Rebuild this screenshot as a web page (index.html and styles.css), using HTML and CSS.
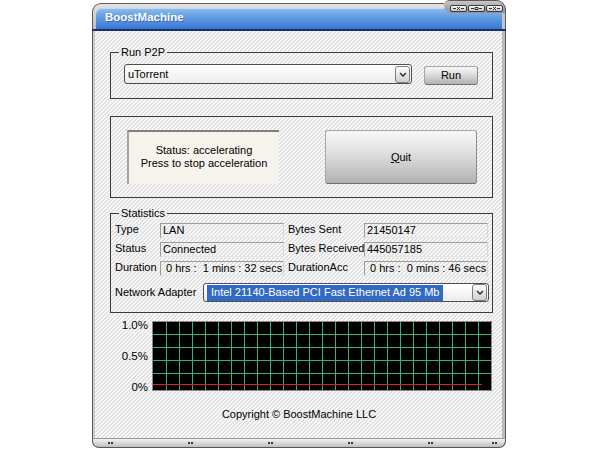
FILE: index.html
```html
<!DOCTYPE html>
<html>
<head>
<meta charset="utf-8">
<title>BoostMachine</title>
<link rel="stylesheet" href="styles.css">
</head>
<body>
<div class="window">
  <div class="titlebar">
    <div class="tb-left"><div class="tb-blue"><span class="title">BoostMachine</span></div></div>
    <div class="tb-right">
      <div class="caps">
        <span class="cap"><svg width="11" height="5" viewBox="0 0 11 5"><path d="M0 2.5H3M8 2.5H11M4 1L7 4M7 1L4 4" stroke="#333" stroke-width="1" fill="none"/></svg></span>
        <span class="cap"><svg width="11" height="5" viewBox="0 0 11 5"><path d="M0 2.5H3M8 2.5H11M4 1.5H7V3.5H4Z" stroke="#333" stroke-width="1" fill="none"/></svg></span>
        <span class="cap"><svg width="11" height="5" viewBox="0 0 11 5"><path d="M0 2.5H3M8 2.5H11M4 1L7 4M7 1L4 4" stroke="#333" stroke-width="1" fill="none"/></svg></span>
      </div>
    </div>
  </div>
  <div class="client">
    <fieldset class="group g1">
      <legend>Run P2P</legend>
      <div class="row1">
        <div class="combo c1">
          <span class="combo-text">uTorrent</span>
          <span class="combo-btn"><svg width="8" height="5" viewBox="0 0 8 5"><path d="M1 1L4 4L7 1" stroke="#333" stroke-width="1.5" fill="none"/></svg></span>
        </div>
        <button class="btn run">Run</button>
      </div>
    </fieldset>
    <div class="group g2">
      <div class="status">Status: accelerating<br>Press to stop acceleration</div>
      <button class="btn quit"><u>Q</u>uit</button>
    </div>
    <fieldset class="group g3">
      <legend>Statistics</legend>
      <div class="stats">
        <span class="lbl">Type</span><span class="fld">LAN</span><span class="lbl r">Bytes Sent</span><span class="fld">21450147</span>
        <span class="lbl">Status</span><span class="fld">Connected</span><span class="lbl r">Bytes Received</span><span class="fld">445057185</span>
        <span class="lbl">Duration</span><span class="fld pre"> 0 hrs :  1 mins : 32 secs</span><span class="lbl r">DurationAcc</span><span class="fld pre"> 0 hrs :  0 mins : 46 secs</span>
      </div>
      <div class="adapter">
        <span class="lbl wide">Network Adapter</span>
        <div class="combo c2">
          <span class="combo-text"><span class="sel">Intel 21140-Based PCI Fast Ethernet Ad 95 Mb</span></span>
          <span class="combo-btn"><svg width="8" height="5" viewBox="0 0 8 5"><path d="M1 1L4 4L7 1" stroke="#333" stroke-width="1.5" fill="none"/></svg></span>
        </div>
      </div>
    </fieldset>
    <div class="chart">
      <div class="yaxis"><span>1.0%</span><span>0.5%</span><span>0%</span></div>
      <svg class="plot" width="340" height="70" viewBox="0 0 340 70">
        <rect x="0.5" y="0.5" width="339" height="69" fill="#000" stroke="#8a8a8a"/>
        <path stroke="#38b07a" stroke-width="1" fill="none" d="M14.5 1V69M27.5 1V69M40.5 1V69M53.5 1V69M66.5 1V69M79.5 1V69M92.5 1V69M105.5 1V69M118.5 1V69M131.5 1V69M144.5 1V69M157.5 1V69M170.5 1V69M183.5 1V69M196.5 1V69M209.5 1V69M222.5 1V69M235.5 1V69M248.5 1V69M261.5 1V69M274.5 1V69M287.5 1V69M300.5 1V69M313.5 1V69M326.5 1V69M1 13.5H339M1 26.5H339M1 39.5H339M1 52.5H339"/>
        <path stroke="#e0201c" stroke-width="1" d="M1 63.5H330"/>
      </svg>
    </div>
    <div class="copy">Copyright © BoostMachine LLC</div>
  </div>
  <div class="bottombar"><i></i><i></i><i></i><i></i><i></i><i class="last"></i></div>
</div>
</body>
</html>
```
FILE: styles.css
```css
* { box-sizing: border-box; }
html, body { margin: 0; padding: 0; background: #fff; }
body { font: 11px/13px "Liberation Sans", Arial, sans-serif; color: #000; }

.window { margin-left: 92px; width: 414px; height: 448px; display: flex; flex-direction: column; }

/* title bar */
.titlebar { display: flex; height: 31px; flex: none; border-bottom: 2px solid #16336f; }
.tb-left { flex: 1; margin-top: 3px; height: 26px; background: linear-gradient(#e2e2e2, #bdbdbd); border-top: 1px solid #5a5a5a; border-left: 1px solid #5a5a5a; border-top-left-radius: 9px; padding: 4px 0 0 3px; }
.tb-blue { height: 100%; border-top-left-radius: 6px; background: linear-gradient(#8ebdf0 0, #5f99e2 10px, #3c78d3 21px); box-shadow: inset 0 1px rgba(255,255,255,0.45); padding-left: 9px; }
.title { color: #fff; font: bold 11.5px/18px "Liberation Sans", Arial, sans-serif; text-shadow: 1px 1px 0 rgba(10,30,90,0.35); }
.tb-right { width: 62px; height: 29px; display: flex; flex-direction: column; border-top-right-radius: 10px; overflow: hidden; background: linear-gradient(to bottom, transparent 0 8px, #8ebdf0 8px, #5f99e2 18px, #3c78d3 29px); box-shadow: inset -1px 0 #5a5a5a, inset -4px 0 #c4c4c4; }
.caps { height: 13px; flex: none; background: linear-gradient(#c8c8c8, #8e8e8e); border-top: 1px solid #5a5a5a; border-right: 1px solid #5a5a5a; border-radius: 6px 10px 0 8px; display: flex; gap: 1px; padding: 4px 0 0 6px; }
.cap { width: 17px; height: 7px; border: 1px solid #3a3a3a; border-radius: 2px; background: linear-gradient(#fafafa, #c4c4c4); display: flex; align-items: center; justify-content: center; }
.cap svg { display: block; }

/* client area */
.client { flex: 1; display: flex; flex-direction: column; border-left: 1px solid #5a5a5a; border-right: 1px solid #5a5a5a; background-color: #f6f6f6; background-image: repeating-linear-gradient(135deg, #fafafa 0 1.6px, #e0e0e0 1.6px 2.83px); box-shadow: inset 2px 0 #cdcdcd, inset -3px 0 #bcbcbc; padding-top: 15px; }

.group { margin: 0 0 0 17px; padding: 0; border: 1px solid #3a3a3a; width: 383px; min-width: 0; }
legend { padding: 0 2px; margin-left: 8px; font: 11px/13px "Liberation Sans", Arial, sans-serif; }

.row1 { display: flex; align-items: flex-start; gap: 12px; padding: 5px 14px 13px 13px; }

.combo { display: flex; align-items: center; border: 1px solid #4e4e4e; border-radius: 3px; background: linear-gradient(#ffffff, #ececec); }
.c1 { width: 288px; height: 20px; padding: 0 1px 0 2px; }
.c2 { width: 286px; height: 19px; padding: 0 1px 0 3px; }
.combo-text { flex: 1; line-height: 14px; white-space: nowrap; overflow: hidden; }
.c1 .combo-text { padding-left: 1px; }
.combo-btn { width: 15px; height: 17px; border: 1px solid #7c7c7c; border-radius: 3px; background: linear-gradient(#fdfdfd, #cfcfcf); display: flex; align-items: center; justify-content: center; }
.combo-btn svg { display: block; }
.sel { display: inline-block; background: #316ac5; color: #fff; padding: 1px 3px 2px 4px; line-height: 13px; }

.btn { font: 11px/13px "Liberation Sans", Arial, sans-serif; color: #000; padding: 0; margin: 0; border: 1px solid #a6a6a6; border-bottom-color: #707070; border-right-color: #8c8c8c; border-radius: 3px; background: linear-gradient(#f7f7f7, #e4e4e4 35%, #b2b2b2); }
.run { width: 54px; height: 19px; margin-top: 2px; }
.quit { width: 152px; height: 54px; }

.g2 { margin-top: 17px; display: flex; gap: 46px; padding: 13px 0 13px 16px; }
.status { width: 152px; height: 54px; background: #f5f3ec; border-top: 2px solid #808080; border-left: 2px solid #a4a4a4; display: flex; align-items: center; justify-content: center; text-align: center; padding-bottom: 2px; }

.g3 { margin-top: 9px; }
.stats { display: grid; grid-template-columns: 45px 124px 80px 124px; grid-auto-rows: 15px; row-gap: 4px; padding: 3px 4px 0 4px; }
.lbl { white-space: nowrap; line-height: 13px; }
.lbl.r { padding-left: 4px; }
.fld { border-top: 1px solid #9c9c9c; border-left: 1px solid #9c9c9c; border-right: 1px solid #d6d6d6; border-bottom: 1px solid #e6e6e6; padding-left: 2px; line-height: 13px; white-space: nowrap; overflow: hidden; }
.pre { white-space: pre; }
.adapter { display: flex; align-items: center; margin-top: 7px; padding: 0 0 10px 4px; }
.lbl.wide { width: 88px; }

.chart { display: flex; align-items: flex-start; gap: 4px; margin: 8px 0 0 17px; }
.yaxis { width: 38px; display: flex; flex-direction: column; gap: 18px; margin-top: -2px; text-align: right; font-size: 11.5px; }
.plot { display: block; }

.copy { margin-top: 14px; text-align: center; }

/* bottom frame */
.bottombar { height: 10px; flex: none; border: 1px solid #555; border-top: 1px solid #9a9a9a; border-radius: 0 0 7px 7px; background: linear-gradient(#f2f2f2, #c0c0c0); display: flex; align-items: center; padding: 0 8px 0 15px; }
.bottombar i { display: block; width: 5px; height: 2px; background: linear-gradient(to right, #3a3a3a 0 2px, transparent 2px 3px, #3a3a3a 3px 5px); }
.bottombar i + i { margin-left: 75px; }
.bottombar i.last { margin-left: auto; }
```
